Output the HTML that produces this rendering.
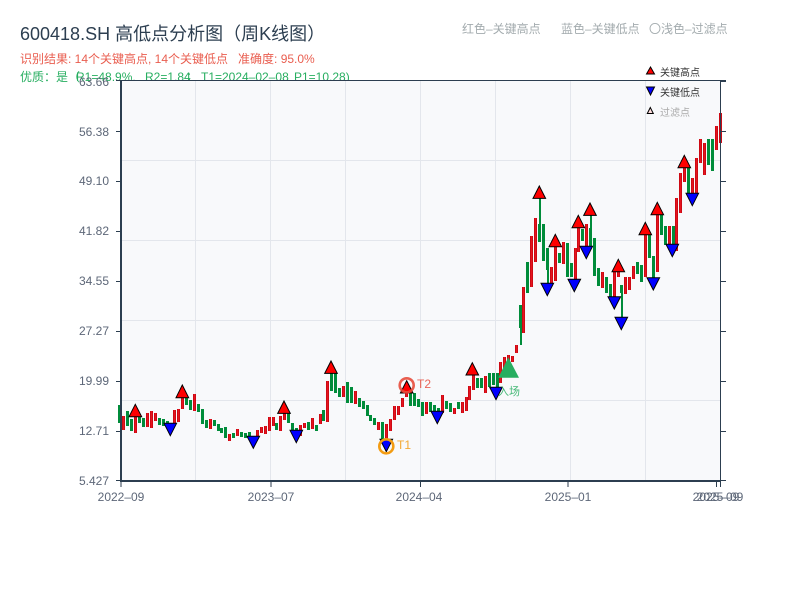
<!DOCTYPE html>
<html lang="zh">
<head>
<meta charset="utf-8">
<title>600418.SH 高低点分析图</title>
<style>
html,body{margin:0;padding:0;background:#fff;width:800px;height:600px;overflow:hidden}
svg{display:block}
text{font-family:"Liberation Sans","Noto Sans CJK SC",sans-serif}
</style>
</head>
<body>
<svg width="800" height="600" viewBox="0 0 800 600" xmlns="http://www.w3.org/2000/svg">
<defs>
<path id="r" fill="none" d="M123.5 416V430M135.5 413V433M147.5 413V427M151.5 411V428M155.5 413V421M174.5 410V424M178.5 409V422M182.5 397V409M194.5 394V411M210.5 419V429M229.5 434V441M237.5 429V436M253.5 436V441M257.5 430V437M261.5 427V433M265.5 426V434M269.5 417V431M273.5 417V426M280.5 416V431M284.5 413V420M300.5 425V436M304.5 423V428M312.5 418V429M320.5 414V424M327.5 381V422M343.5 386V397M355.5 391V404M378.5 422V430M386.5 424V443M390.5 419V431M394.5 406V420M398.5 406V415M402.5 398V407M406.5 385V397M426.5 402V414M442.5 395V413M454.5 408V414M462.5 402V413M466.5 397V411M469.5 386V400M473.5 372V390M485.5 376V393M500.5 362V383M504.5 357V370M508.5 355V367M512.5 356V362M516.5 345V353M523.5 287V333M531.5 236V287M535.5 218V262M551.5 267V283M555.5 247V281M563.5 242V264M575.5 248V279M578.5 227V252M586.5 224V247M602.5 272V288M614.5 272V297M618.5 270V277M625.5 277V294M629.5 277V290M633.5 266V279M645.5 235V277M657.5 215V272M669.5 226V245M676.5 198V251M680.5 173V213M684.5 167V182M692.5 178V193M696.5 158V194M700.5 139V163M704.5 143V175M716.5 126V150M720.5 113V143"/>
</defs>
<rect width="800" height="600" fill="#fff"/>
<text x="20" y="40" font-size="18" fill="#2c3e50">600418.SH 高低点分析图（周K线图）</text>
<text x="20" y="63" font-size="12" fill="#e74c3c" opacity=".9" xml:space="preserve">识别结果: 14个关键高点, 14个关键低点   准确度: 95.0%</text>
<text y="81" font-size="12" fill="#27ae60"><tspan x="20">优质：是（</tspan><tspan x="76">R1=48.9%,</tspan><tspan x="145">R2=1.84</tspan><tspan x="186">；</tspan><tspan x="201">T1=2024–02–08</tspan><tspan x="294">P1=10.28)</tspan></text>
<text x="462" y="33" font-size="12" fill="#a3abae">红色–关键高点</text>
<text x="561" y="33" font-size="12" fill="#a3abae">蓝色–关键低点</text>
<text x="649" y="33" font-size="12" fill="#a3abae">〇浅色–过滤点</text>

<rect x="121" y="81" width="600" height="400" fill="#f8f9fb"/>
<path d="M121 160.5H721M121 240.5H721M121 320.5H721M121 400.5H721M195.5 81V481M270.5 81V481M345.5 81V481M420.5 81V481M495.5 81V481M570.5 81V481M645.5 81V481" stroke="#e3e6ec" stroke-width="1" fill="none"/>

<path fill="none" stroke="#008c3a" stroke-width="3" d="M119.5 405V423M127.5 411V426M131.5 419V431M139.5 417V423M143.5 418V427M159.5 418V425M163.5 419V426M167.5 421V425M170.5 423V428M186.5 397V405M190.5 400V410M198.5 404V412M202.5 409V424M206.5 420V428M214.5 420V426M218.5 424V431M221.5 428V433M225.5 427V438M233.5 433V438M241.5 432V437M245.5 433V438M249.5 432V437M276.5 423V430M288.5 413V423M292.5 423V431M296.5 428V434M308.5 422V430M316.5 425V431M323.5 410V421M331.5 373V391M335.5 373V393M339.5 388V397M347.5 382V403M351.5 387V403M359.5 398V407M363.5 401V409M367.5 405V416M370.5 415V421M374.5 418V425M382.5 422V440M410.5 393V406M414.5 393V406M418.5 399V407M422.5 402V416M430.5 402V412M434.5 405V413M438.5 408V415M446.5 401V409M450.5 403V412M458.5 402V409M477.5 378V388M481.5 378V388M489.5 373V387M493.5 373V385M497.5 373V387M520.5 305V328M527.5 262V293M539.5 224V242M543.5 224V261M547.5 248V270M559.5 253V263M567.5 243V277M571.5 263V277M582.5 229V241M590.5 228V247M594.5 238V276M598.5 268V286M606.5 277V293M610.5 284V297M621.5 285V293M637.5 262V274M641.5 265V282M649.5 234V258M653.5 256V278M661.5 215V235M665.5 226V245M673.5 226V245M688.5 168V193M708.5 139V165M712.5 139V171"/>
<path fill="none" stroke="#008c3a" stroke-width="2" d="M521 328V345M540 198V224M548 270V283M591 213V228M622 293V318"/>
<use href="#r" stroke="#cc0a14" stroke-width="3"/>
<use href="#r" stroke="#e6141f" stroke-width="1"/>

<g fill="#ff0000" stroke="#000" stroke-width="1">
<polygon points="135.3,404.3 129,416.7 141.7,416.7"/>
<polygon points="182.3,385 176,397.7 188.7,397.7"/>
<polygon points="284,401 277.7,413.4 290.3,413.4"/>
<polygon points="331,361 324.7,373.4 337.3,373.4"/>
<polygon points="406.7,380.7 400.4,393 413,393"/>
<polygon points="472.3,362.7 466,375 478.6,375"/>
<polygon points="539.3,186 533,198.4 545.6,198.4"/>
<polygon points="555.3,234.3 549,246.7 561.6,246.7"/>
<polygon points="578.3,215.3 572,227.7 584.6,227.7"/>
<polygon points="590,203 583.7,215.4 596.3,215.4"/>
<polygon points="618.3,259.3 612,271.7 624.6,271.7"/>
<polygon points="645.3,222.3 639,234.7 651.6,234.7"/>
<polygon points="657.3,202.3 651,214.7 663.6,214.7"/>
<polygon points="684.3,155.3 678,167.7 690.6,167.7"/>
</g>
<g fill="#0000ff" stroke="#000" stroke-width="1">
<polygon points="164,423.3 176.6,423.3 170.3,435.7"/>
<polygon points="247,436.3 259.6,436.3 253.3,448.3"/>
<polygon points="290,430.3 302.6,430.3 296.3,442.7"/>
<polygon points="380,439.3 392.6,439.3 386.3,451.7"/>
<polygon points="431,411.3 443.6,411.3 437.3,423.7"/>
<polygon points="489.7,387.3 502.3,387.3 496,399.7"/>
<polygon points="541,283.3 553.6,283.3 547.3,295.7"/>
<polygon points="568,279.3 580.6,279.3 574.3,291.7"/>
<polygon points="580,246.3 592.6,246.3 586.3,258.7"/>
<polygon points="608,296.7 620.6,296.7 614.3,309"/>
<polygon points="615,317.3 627.6,317.3 621.3,329.7"/>
<polygon points="647,277.7 659.6,277.7 653.3,290"/>
<polygon points="666,244.3 678.6,244.3 672.3,256.7"/>
<polygon points="686,193.3 698.6,193.3 692.3,205.7"/>
</g>

<circle cx="406.7" cy="385.3" r="7" fill="none" stroke="#e74c3c" stroke-width="2.6" opacity=".9"/>
<circle cx="386.3" cy="446.3" r="7" fill="none" stroke="#f39c12" stroke-width="2.6"/>
<polygon points="508.3,357.3 498.3,377.7 519,377.7" fill="#27ae60"/>
<text x="417" y="388" font-size="12" fill="#e74c3c" opacity=".85">T2</text>
<text x="397" y="449" font-size="12" fill="#f39c12" opacity=".85">T1</text>
<text x="498" y="395" font-size="11" fill="#27ae60" opacity=".85">入场</text>

<path fill="none" stroke="#2c3e50" stroke-width="1" d="M116 80.5H726M720.5 81V487M116 131.5H121M116 181.5H121M116 231.5H121M116 281.5H121M116 331.5H121M116 381.5H121M116 431.5H121M721 81.5H726M721 131.5H726M721 181.5H726M721 231.5H726M721 281.5H726M721 331.5H726M721 381.5H726M721 431.5H726M721 480.5H726M116 480.5H121M121 482V487M271 482V487M420.5 482V487M568 482V487M716.5 482V487"/>
<path fill="none" stroke="#2c3e50" stroke-width="2" d="M121 80V482M120 481H721"/>

<g font-size="12" fill="#5d6778" text-anchor="end">
<text x="109" y="86">63.66</text>
<text x="109" y="136">56.38</text>
<text x="109" y="185">49.10</text>
<text x="109" y="235">41.82</text>
<text x="109" y="285">34.55</text>
<text x="109" y="335">27.27</text>
<text x="109" y="385">19.99</text>
<text x="109" y="435">12.71</text>
<text x="109" y="485">5.427</text>
</g>
<g font-size="12" fill="#5d6778" text-anchor="middle">
<text x="121" y="501">2022–09</text>
<text x="271" y="501">2023–07</text>
<text x="419" y="501">2024–04</text>
<text x="568" y="501">2025–01</text>
<text x="716" y="501">2025–09</text>
<text x="720" y="501">2025–09</text>
</g>

<polygon points="650.5,67 646.5,74 654.5,74" fill="#ff0000" stroke="#000" stroke-width="1"/>
<polygon points="646.5,87 654.5,87 650.5,95" fill="#0000ff" stroke="#000" stroke-width="1"/>
<polygon points="650.3,107.5 647.3,113.5 653.3,113.5" fill="#ffdddd" stroke="#000" stroke-width="1"/>
<text x="660" y="76" font-size="10" fill="#333">关键高点</text>
<text x="660" y="96" font-size="10" fill="#333">关键低点</text>
<text x="660" y="116" font-size="10" fill="#aaa">过滤点</text>
</svg>
</body>
</html>
